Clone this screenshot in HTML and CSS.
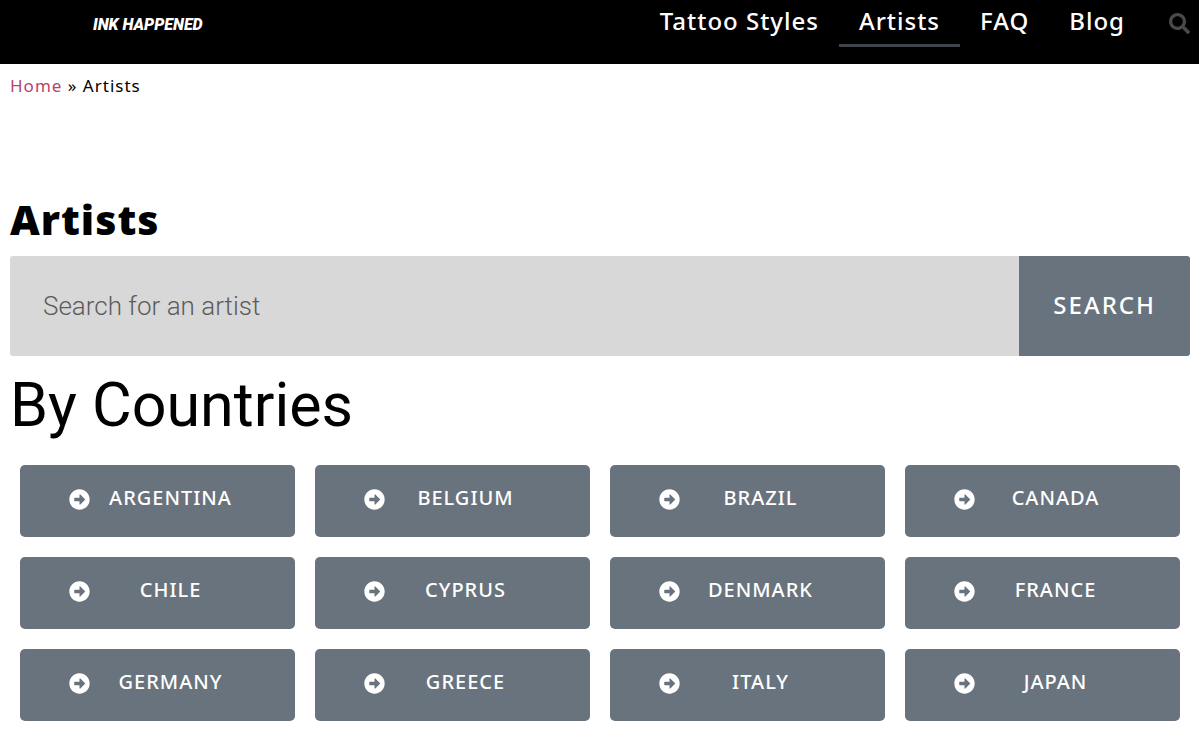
FILE: index.html
```html
<!DOCTYPE html>
<html lang="en">
  <head>
    <meta charset="UTF-8" />
    <meta name="viewport" content="width=device-width, initial-scale=1.0" />
    <title>Artists - Ink Happened</title>
    <link rel="stylesheet" href="styles.css">
  </head>
  <body>
    <svg class="sprite" aria-hidden="true">
      <symbol id="arrow" viewBox="0 0 512 512">
        <path d="M256 8c137 0 248 111 248 248S393 504 256 504 8 393 8 256 119 8 256 8zM140 296h116v74.900c0 10.700 13 16.100 20.500 8.500l114.300-114.900c4.700-4.700 4.700-12.200 0-16.900l-114.300-115c-7.600-7.600-20.500-2.200-20.500 8.500V216H140c-6.600 0-12 5.400-12 12v56c0 6.600 5.400 12 12 12z"/>
      </symbol>
    </svg>

    <header class="site-header">
      <a class="logo" href="#">INK HAPPENED</a>
      <nav class="main-nav">
        <a href="#">Tattoo Styles</a>
        <a href="#" class="active">Artists</a>
        <a href="#">FAQ</a>
        <a href="#">Blog</a>
      </nav>
      <button class="search-toggle" type="button" aria-label="Search">
        <svg viewBox="0 0 512 512"><path d="M505 442.700L405.300 343c-4.500-4.500-10.600-7-17-7H372c27.600-35.300 44-79.700 44-128C416 93.100 322.900 0 208 0S0 93.100 0 208s93.100 208 208 208c48.300 0 92.700-16.400 128-44v16.300c0 6.400 2.500 12.500 7 17l99.700 99.700c9.400 9.400 24.600 9.400 33.900 0l28.300-28.300c9.400-9.400 9.400-24.600.1-34zM208 336c-70.700 0-128-57.200-128-128 0-70.700 57.200-128 128-128 70.700 0 128 57.200 128 128 0 70.700-57.200 128-128 128z"/></svg>
      </button>
    </header>

    <main class="content">
      <p class="breadcrumbs"><a href="#">Home</a> » Artists</p>
      <h1>Artists</h1>
      <form class="search-form">
        <input type="search" placeholder="Search for an artist" aria-label="Search for an artist">
        <button type="submit">SEARCH</button>
      </form>
      <h2>By Countries</h2>
      <div class="countries">
        <a class="country" href="#"><svg><use href="#arrow"/></svg><span>ARGENTINA</span></a>
        <a class="country" href="#"><svg><use href="#arrow"/></svg><span>BELGIUM</span></a>
        <a class="country" href="#"><svg><use href="#arrow"/></svg><span>BRAZIL</span></a>
        <a class="country" href="#"><svg><use href="#arrow"/></svg><span>CANADA</span></a>
        <a class="country" href="#"><svg><use href="#arrow"/></svg><span>CHILE</span></a>
        <a class="country" href="#"><svg><use href="#arrow"/></svg><span>CYPRUS</span></a>
        <a class="country" href="#"><svg><use href="#arrow"/></svg><span>DENMARK</span></a>
        <a class="country" href="#"><svg><use href="#arrow"/></svg><span>FRANCE</span></a>
        <a class="country" href="#"><svg><use href="#arrow"/></svg><span>GERMANY</span></a>
        <a class="country" href="#"><svg><use href="#arrow"/></svg><span>GREECE</span></a>
        <a class="country" href="#"><svg><use href="#arrow"/></svg><span>ITALY</span></a>
        <a class="country" href="#"><svg><use href="#arrow"/></svg><span>JAPAN</span></a>
      </div>
    </main>
  </body>
</html>
```
FILE: styles.css
```css
* {
    box-sizing: border-box;
}

body {
    margin: 0;
    font-family: "Noto Sans", "Open Sans", sans-serif;
    color: #000;
    background-color: #fff;
}

a {
    text-decoration: none;
}

button {
    border: none;
    font-family: inherit;
    cursor: pointer;
}

.sprite {
    display: none;
}

/* Header */
.site-header {
    display: flex;
    align-items: flex-start;
    height: 64px;
    padding-right: 9px;
    background-color: #000;
}

.logo {
    margin-left: 93px;
    padding-top: 13px;
    font-family: Roboto, sans-serif;
    font-size: 16px;
    font-weight: 900;
    font-style: italic;
    line-height: 24px;
    color: #fff;
}

.main-nav {
    display: flex;
    margin-left: auto;
}

.main-nav a {
    padding: 6px 20px 8px;
    border-bottom: 3px solid transparent;
    font-size: 24px;
    font-weight: 500;
    line-height: 30px;
    letter-spacing: 1px;
    color: #fff;
}

.main-nav a.active {
    border-bottom-color: #3f444b;
}

.search-toggle {
    margin: 13px 0 0 24px;
    padding: 0;
    background: none;
}

.search-toggle svg {
    display: block;
    width: 21px;
    height: 21px;
    fill: #4a4a4a;
}

/* Content */
.content {
    padding: 10px 9px 10px 10px;
}

.breadcrumbs {
    margin: 0 0 96px;
    font-size: 17px;
    line-height: 24px;
    letter-spacing: 1px;
}

.breadcrumbs a {
    color: #b8436d;
}

h1 {
    margin: 0 0 12px;
    font-size: 41px;
    font-weight: 900;
    line-height: 50px;
    letter-spacing: 1px;
}

.search-form {
    display: flex;
    height: 100px;
    border-radius: 3px;
    overflow: hidden;
}

.search-form input {
    flex: 1;
    min-width: 0;
    padding: 0 33px;
    border: none;
    background-color: #d8d8d8;
    font-family: Roboto, sans-serif;
    font-size: 26px;
    font-weight: 300;
}

.search-form input::placeholder {
    color: #5c5c5c;
}

.search-form button {
    padding: 0 34px 4px;
    background-color: #69737d;
    font-size: 24px;
    font-weight: 500;
    letter-spacing: 2px;
    color: #fff;
}

h2 {
    margin: 14px 0 25px;
    font-family: Roboto, sans-serif;
    font-size: 61px;
    font-weight: 400;
    line-height: 70px;
}

.countries {
    display: grid;
    grid-template-columns: repeat(4, 1fr);
    gap: 20px;
    padding: 0 10px;
}

.country {
    display: flex;
    align-items: center;
    gap: 5px;
    height: 72px;
    padding: 0 49px 4px;
    border-radius: 5px;
    background-color: #69737d;
    font-size: 20px;
    font-weight: 500;
    line-height: 20px;
    letter-spacing: 1px;
    color: #fff;
}

.country svg {
    width: 21px;
    height: 21px;
    fill: #fff;
}

.country span {
    flex: 1;
    padding-bottom: 2px;
    text-align: center;
}
```
